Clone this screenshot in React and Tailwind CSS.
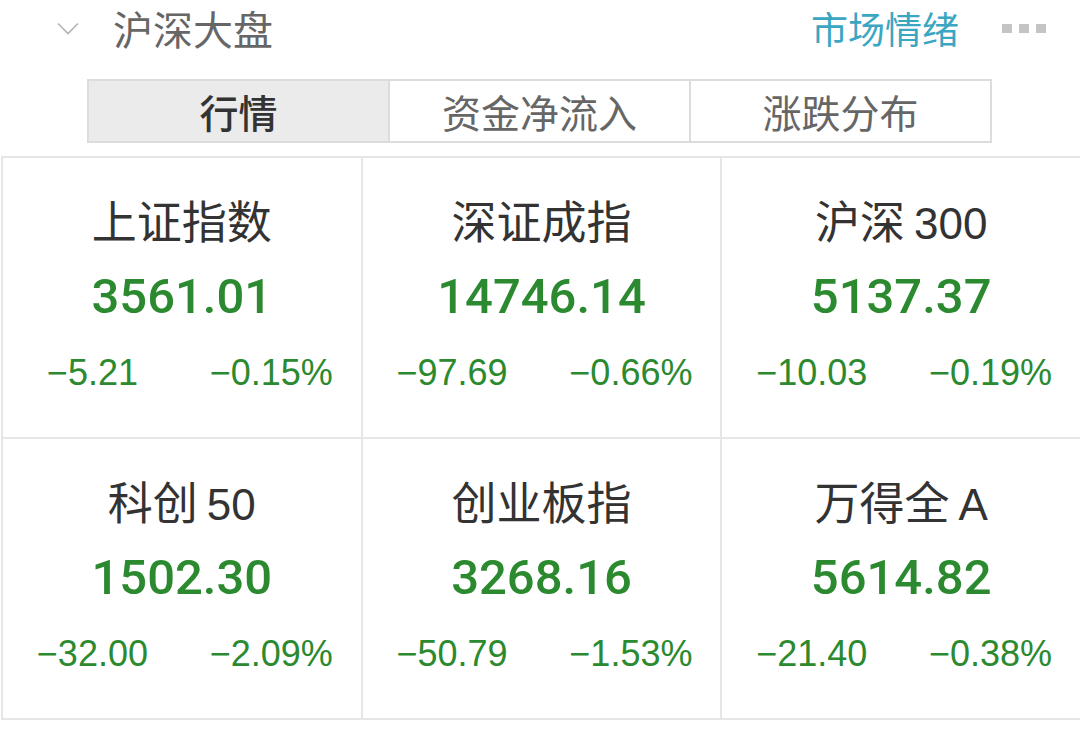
import React from 'react';

const cjk = { fontFamily: '"Noto Sans CJK SC", "Noto Sans", sans-serif' };
const num = { fontFamily: '"Liberation Sans", Arial, sans-serif' };
const big = { fontFamily: 'Roboto, "Liberation Sans", sans-serif' };

const indices = [
  { name: '上证指数', value: '3561.01', change: '−5.21', pct: '−0.15%' },
  { name: '深证成指', value: '14746.14', change: '−97.69', pct: '−0.66%' },
  { name: '沪深', tail: '300', value: '5137.37', change: '−10.03', pct: '−0.19%' },
  { name: '科创', tail: '50', value: '1502.30', change: '−32.00', pct: '−2.09%' },
  { name: '创业板指', value: '3268.16', change: '−50.79', pct: '−1.53%' },
  { name: '万得全', tail: 'A', value: '5614.82', change: '−21.40', pct: '−0.38%' },
];

const tabs = ['行情', '资金净流入', '涨跌分布'];

const IndexCell = ({ item }) => (
  <div className="h-[281px] border-r-2 border-b-2 border-[#e6e6e6] flex flex-col items-center">
    <div className="mt-[39px] h-[46px] flex items-baseline text-[45px] leading-[46px] text-[#333]" style={cjk}>
      <span>{item.name}</span>
      {item.tail && <span className="ml-[9px] text-[44px] leading-[46px]" style={num}>{item.tail}</span>}
    </div>
    <div className="mt-[29px] h-[50px] text-[49px] leading-[50px] font-medium text-[#2b8a2f]" style={big}>
      {item.value}
    </div>
    <div className="mt-[33px] h-[36px] w-full grid grid-cols-2 text-center text-[36px] leading-[36px] text-[#2b8a2f]" style={num}>
      <span>{item.change}</span>
      <span>{item.pct}</span>
    </div>
  </div>
);

const App = () => {
  return (
    <div className="w-[1080px] h-[756px] bg-white overflow-hidden">
      {/* header */}
      <div className="h-[56px] flex items-center pl-[57px] pr-[34px]">
        <svg width="22" height="13" viewBox="0 0 22 13" fill="none">
          <path d="M1 1.5 L11 11.5 L21 1.5" stroke="#b3b3b3" strokeWidth="1.6" />
        </svg>
        <span className="ml-[34px] text-[40px] leading-[44px] text-[#666]" style={cjk}>沪深大盘</span>
        <span className="ml-auto text-[37px] leading-[44px] text-[#3aa6c2]" style={cjk}>市场情绪</span>
        <div className="ml-[43px] flex gap-[7px]">
          <span className="w-[10px] h-[9px] bg-[#c4c4c4]" />
          <span className="w-[10px] h-[9px] bg-[#c4c4c4]" />
          <span className="w-[10px] h-[9px] bg-[#c4c4c4]" />
        </div>
      </div>

      {/* tabs */}
      <div className="mt-[23px] ml-[87px] w-[905px] h-[64px] flex border-2 border-[#dcdcdc]">
        {tabs.map((t, i) => (
          <div
            key={t}
            className={`flex-1 flex items-center justify-center text-[39px] ${
              i === 0 ? 'bg-[#ebebeb] text-[#333] font-medium' : 'bg-white text-[#666] border-l-2 border-[#dcdcdc]'
            }`}
            style={cjk}
          >
            {t}
          </div>
        ))}
      </div>

      {/* index grid */}
      <div className="mt-[13px] ml-[1px] w-[1081px] grid grid-cols-3 border-t-2 border-l-2 border-[#e6e6e6]">
        {indices.map((item) => (
          <IndexCell key={item.name} item={item} />
        ))}
      </div>
    </div>
  );
};

export default App;
